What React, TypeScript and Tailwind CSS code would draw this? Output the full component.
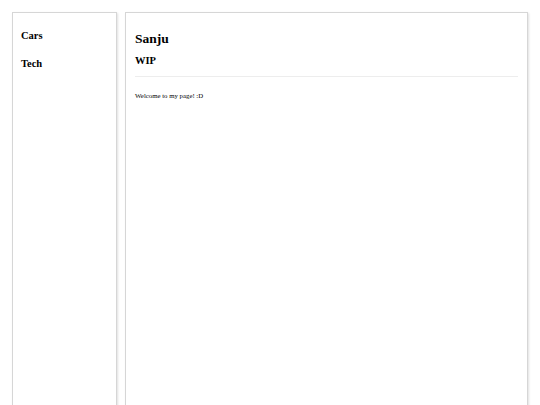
const links = ["Cars", "Tech"]

function Sidebar() {
  return (
    <nav className="w-[105px] shrink-0 border border-[#d6d6d6] shadow-[1px_1px_2px_rgba(0,0,0,0.12)] px-[8px] pt-[18px]">
      <ul className="flex flex-col gap-[18px]">
        {links.map((link) => (
          <li key={link} className="text-[10.5px] leading-[10px] font-bold text-black">
            {link}
          </li>
        ))}
      </ul>
    </nav>
  )
}

function Content() {
  return (
    <main className="w-[403px] shrink-0 border border-[#d6d6d6] shadow-[1px_1px_2px_rgba(0,0,0,0.12)] px-[9px] pt-[19px]">
      <h1 className="text-[13.5px] leading-[13px] font-bold text-black">Sanju</h1>
      <h2 className="mt-[11px] text-[10.5px] leading-[10px] font-bold text-black">WIP</h2>
      <hr className="mt-[10px] border-0 border-t border-[#ededed]" />
      <p className="mt-[15px] text-[6.8px] leading-[7px] text-black">Welcome to my page! :D</p>
    </main>
  )
}

export default function App() {
  return (
    <div
      className="flex gap-[8px] p-[12px] h-[460px] overflow-hidden bg-white"
      style={{ fontFamily: '"Liberation Serif", "Times New Roman", serif' }}
    >
      <Sidebar />
      <Content />
    </div>
  )
}
